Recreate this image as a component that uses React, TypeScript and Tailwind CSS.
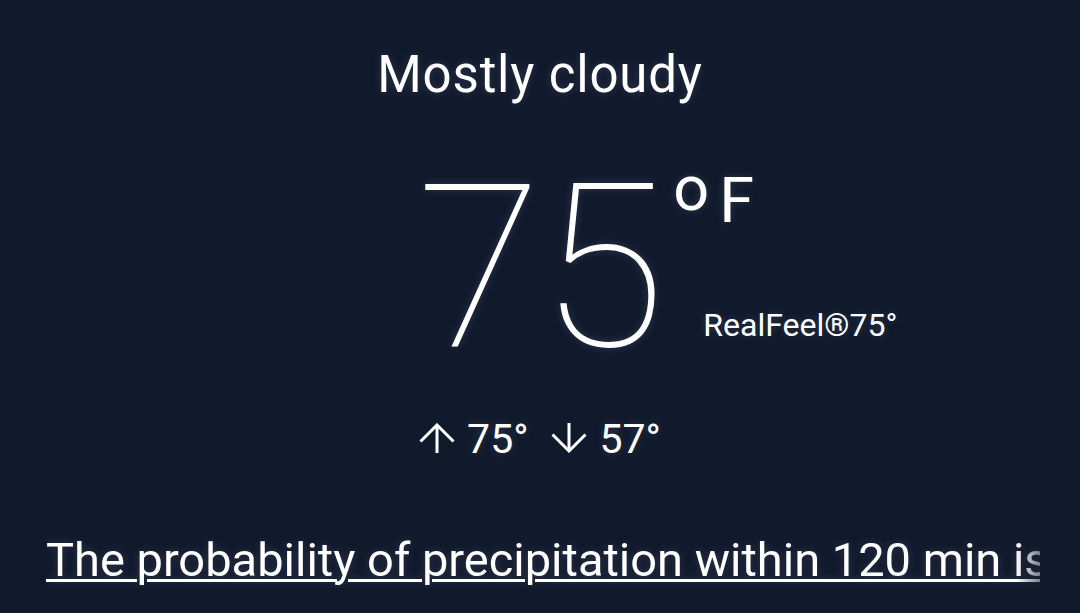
const Arrow = ({ down }: { down?: boolean }) => (
    <svg
        width="36"
        height="30"
        viewBox="0 0 36 30"
        fill="none"
        stroke="currentColor"
        strokeWidth="3"
        className={down ? "mb-[8px] rotate-180" : "mb-[8px]"}
    >
        <path d="M18 30V2.5" />
        <path d="M1.5 18.5L18 2L34.5 18.5" />
    </svg>
);

const App = () => {
    return (
        <div
            className="w-[1080px] h-[613px] overflow-hidden bg-[#111a2d] text-white flex flex-col items-center [text-shadow:0_0_8px_rgba(190,200,225,0.18)]"
            style={{ fontFamily: "Roboto, 'Noto Sans', sans-serif" }}
        >
            <p className="mt-[40px] text-[51px] leading-[70px] tracking-[0.8px]">Mostly cloudy</p>

            <div className="relative mt-[33px]">
                <p className="text-[229px] font-thin leading-[250px] tracking-[-2px]">75</p>
                <div className="absolute left-[calc(100%+10px)] top-[26px] flex items-start text-[63px] leading-[63px]">
                    <span className="relative -top-[12px]">o</span>
                    <span className="ml-[10px]">F</span>
                </div>
                <p className="absolute left-[calc(100%+40px)] top-[162px] whitespace-nowrap text-[32px] leading-[40px]">
                    RealFeel®75°
                </p>
            </div>

            <div className="mt-[24px] flex items-end text-[41px] leading-[44px]">
                <Arrow />
                <span className="ml-[12px]">75°</span>
                <span className="ml-[22px] flex">
                    <Arrow down />
                </span>
                <span className="ml-[13px]">57°</span>
            </div>

            <div className="mt-[71px] w-[994px] self-start ml-[46px] overflow-hidden [mask-image:linear-gradient(to_right,black_calc(100%-24px),rgba(0,0,0,0.45)_100%)]">
                <p className="whitespace-nowrap text-[47px] leading-[56px] underline decoration-[3px] underline-offset-[3px]">
                    The probability of precipitation within 120 min is 0%
                </p>
            </div>
        </div>
    );
};

export default App;
